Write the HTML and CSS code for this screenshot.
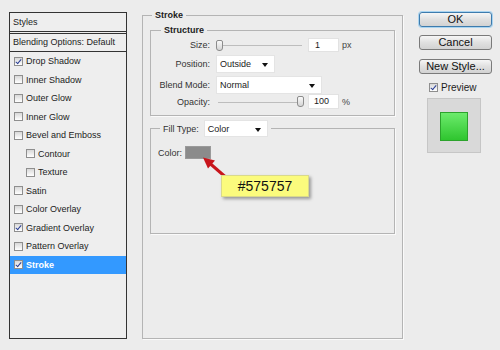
FILE: index.html
```html
<!DOCTYPE html>
<html lang="en">
<head>
  <meta charset="UTF-8" />
  <title>Layer Style - Stroke</title>
  <link rel="stylesheet" href="styles.css">
</head>
<body>
  <div class="dialog">

    <div class="styles-panel">
      <div class="styles-head">Styles</div>
      <div class="blend-row">Blending Options: Default</div>
      <div class="style-item"><span class="check on"></span>Drop Shadow</div>
      <div class="style-item"><span class="check"></span>Inner Shadow</div>
      <div class="style-item"><span class="check"></span>Outer Glow</div>
      <div class="style-item"><span class="check"></span>Inner Glow</div>
      <div class="style-item"><span class="check"></span>Bevel and Emboss</div>
      <div class="style-item sub"><span class="check"></span>Contour</div>
      <div class="style-item sub"><span class="check"></span>Texture</div>
      <div class="style-item"><span class="check"></span>Satin</div>
      <div class="style-item"><span class="check"></span>Color Overlay</div>
      <div class="style-item"><span class="check on"></span>Gradient Overlay</div>
      <div class="style-item"><span class="check"></span>Pattern Overlay</div>
      <div class="style-item active"><span class="check on"></span>Stroke</div>
    </div>

    <fieldset class="group stroke-box">
      <legend class="title">Stroke</legend>

      <fieldset class="group structure-box">
        <legend class="title sub-title">Structure</legend>

        <div class="form-row row-size">
          <span class="label">Size:</span>
          <div class="slider"><span class="thumb"></span></div>
          <div class="num">1</div>
          <span class="unit">px</span>
        </div>
        <div class="form-row row-pos">
          <span class="label">Position:</span>
          <div class="select select-pos">Outside</div>
        </div>
        <div class="form-row row-blend">
          <span class="label">Blend Mode:</span>
          <div class="select select-blend">Normal</div>
        </div>
        <div class="form-row row-opacity">
          <span class="label">Opacity:</span>
          <div class="slider slider-end"><span class="thumb"></span></div>
          <div class="num">100</div>
          <span class="unit">%</span>
        </div>
      </fieldset>

      <fieldset class="group fill-box">
        <legend class="fill-legend">
          <span>Fill Type:</span>
          <div class="select select-fill">Color</div>
        </legend>
        <div class="color-row">
          <span>Color:</span>
          <div class="swatch-wrap">
            <div class="swatch"></div>
            <svg class="pointer" width="50" height="40" viewBox="0 0 50 40">
              <line x1="44" y1="34" x2="25" y2="17.5" stroke="#c8151b" stroke-width="3" />
              <polygon points="18,11.5 30,14.5 23,22.5" fill="#c8151b" />
            </svg>
            <div class="tip">#575757</div>
          </div>
        </div>
      </fieldset>
    </fieldset>

    <div class="actions">
      <div class="btn btn-ok">OK</div>
      <div class="btn">Cancel</div>
      <div class="btn">New Style...</div>
      <div class="preview-row"><span class="check on"></span>Preview</div>
      <div class="preview">
        <div class="preview-swatch"></div>
      </div>
    </div>

  </div>
</body>
</html>
```

FILE: styles.css
```css
* {
  box-sizing: border-box;
}

body {
  margin: 0;
  width: 500px;
  height: 350px;
  background-color: #ececec;
  color: #1c1c1c;
  font-family: "Liberation Sans", Arial, sans-serif;
  font-size: 9px;
  overflow: hidden;
}

.dialog {
  display: flex;
  align-items: flex-start;
  padding: 10px 0 0 9px;
}

/* left list */
.styles-panel {
  width: 118px;
  height: 327px;
  margin-top: 2px;
  border: 1px solid #333333;
  background-color: #eeeeee;
}

.styles-head {
  height: 21px;
  line-height: 18px;
  padding-left: 3px;
  border-bottom: 3px double #333333;
}

.blend-row {
  height: 18px;
  line-height: 17px;
  padding-left: 3px;
  border-bottom: 1px solid #333333;
}

.style-item {
  height: 18.5px;
  display: flex;
  align-items: center;
  gap: 3px;
  padding-left: 4px;
}

.style-item.sub {
  padding-left: 16px;
}

.style-item.active {
  background-color: #3399ff;
  color: #ffffff;
  font-weight: bold;
}

.check {
  position: relative;
  width: 9px;
  height: 9px;
  border: 1px solid #8e8e8e;
  background: linear-gradient(#d8d8d8, #ffffff);
  flex: none;
}

.check.on::after {
  content: "";
  position: absolute;
  left: 2px;
  top: 0;
  width: 2px;
  height: 5px;
  border-right: 1.5px solid #2b3f95;
  border-bottom: 1.5px solid #2b3f95;
  transform: rotate(40deg);
}

/* group boxes */
.group {
  margin: 0;
  min-width: 0;
  border: 1px solid #b4b4b4;
  box-shadow: 1px 1px 0 #fafafa;
}

.title {
  padding: 0 3px;
  font-weight: bold;
  font-size: 9px;
  line-height: 11px;
}

.stroke-box {
  width: 261px;
  height: 329px;
  margin-left: 15px;
  padding: 4px 7px 0 7px;
}

.stroke-box > .title {
  margin-left: 2px;
}

.structure-box {
  padding: 2px 7px 6px 7px;
}

.sub-title {
  margin-left: 3px;
}

.form-row {
  display: flex;
  align-items: center;
}

.label {
  width: 52px;
  margin-right: 6px;
  text-align: right;
  color: #333333;
}

.row-size {
  height: 14px;
  margin-bottom: 3px;
}

.row-pos {
  height: 18px;
  margin-bottom: 3px;
}

.row-blend {
  height: 18px;
}

.row-opacity {
  height: 15px;
}

.slider {
  width: 88px;
  height: 12px;
  margin-right: 4px;
  display: flex;
  align-items: center;
  background: linear-gradient(#bdbdbd, #bdbdbd) no-repeat 1px 6px / 85px 1px;
}

.slider-end {
  justify-content: flex-end;
  background-position: 2px 6px;
}

.thumb {
  width: 7px;
  height: 11px;
  border: 1px solid #8c8c8c;
  border-radius: 2px 2px 3px 3px;
  background: linear-gradient(#fafafa, #d4d4d4);
}

.num {
  width: 31px;
  height: 100%;
  padding-left: 6px;
  line-height: 13px;
  background-color: #ffffff;
  border: 1px solid #e2e2e2;
}

.row-opacity .num {
  padding-left: 5px;
}

.unit {
  margin-left: 3px;
  color: #444444;
}

.select {
  position: relative;
  height: 18px;
  line-height: 17px;
  padding-left: 3px;
  background-color: #ffffff;
  border: 1px solid #e4e4e4;
  color: #222222;
}

.select::after {
  content: "";
  position: absolute;
  right: 6px;
  top: 7px;
  border-left: 3px solid transparent;
  border-right: 3px solid transparent;
  border-top: 4px solid #111111;
}

.select-pos {
  width: 59px;
}

.select-blend {
  width: 106px;
}

/* fill type */
.fill-box {
  margin-top: 4px;
  padding: 9px 7px 74px 7px;
}

.fill-legend {
  display: flex;
  align-items: center;
  gap: 5px;
  margin-left: 2px;
  padding: 0 3px;
  color: #333333;
}

.select-fill {
  width: 64px;
  height: 17px;
  line-height: 16px;
}

.color-row {
  display: flex;
  align-items: center;
  gap: 3px;
  height: 13px;
  color: #333333;
}

.swatch-wrap {
  position: relative;
}

.swatch {
  width: 26px;
  height: 13px;
  background-color: #8b8b8b;
  border: 1px solid #9a9a9a;
}

.pointer {
  position: absolute;
  left: 0;
  top: 0;
}

.tip {
  position: absolute;
  left: 36px;
  top: 29px;
  width: 88px;
  height: 22px;
  background-color: #fbfb7d;
  border: 1px solid #d9d98c;
  box-shadow: 2px 2px 3px rgba(0, 0, 0, 0.35);
  color: #111111;
  font-size: 14px;
  line-height: 20px;
  text-align: center;
}

/* right column */
.actions {
  width: 73px;
  margin: 2px 0 0 16px;
  display: flex;
  flex-direction: column;
}

.btn {
  height: 15px;
  line-height: 13px;
  margin-bottom: 8px;
  text-align: center;
  font-size: 11px;
  color: #111111;
  border: 1px solid #7a7a7a;
  border-radius: 3px;
  background: linear-gradient(#f6f6f6, #e0e0e0 50%, #d2d2d2);
}

.btn-ok {
  border-color: #3d7bad;
  box-shadow: 0 0 0 1px #a9d4f0;
}

.btn:nth-child(3) {
  margin-top: 1px;
  margin-bottom: 0;
}

.preview-row {
  display: flex;
  align-items: center;
  gap: 3px;
  height: 12px;
  margin-top: 7px;
  padding-left: 10px;
  font-size: 10px;
}

.preview {
  width: 54px;
  height: 55px;
  margin: 5px 0 0 8px;
  display: flex;
  align-items: center;
  justify-content: center;
  padding-top: 2px;
  background-color: #d9d9d9;
  border: 1px solid #c6c6c6;
}

.preview-swatch {
  width: 28px;
  height: 29px;
  border: 1px solid #2ca32c;
  background: linear-gradient(#6ceb6c, #2fc52f);
}
```
